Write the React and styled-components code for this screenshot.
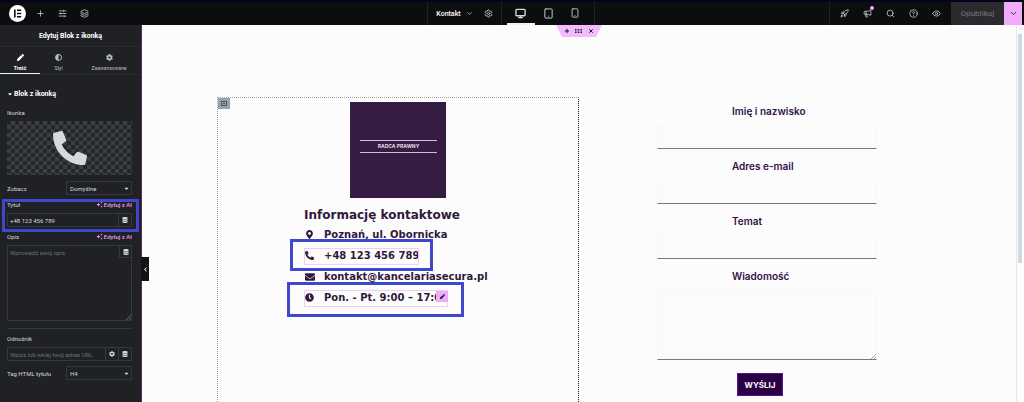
import React from 'react';
import styled, { createGlobalStyle, css } from 'styled-components';
import {
  ChevronDown,
  ChevronUp,
  CircleHelp,
  Eye,
  Layers,
  Megaphone,
  Monitor,
  Plus,
  Rocket,
  Search,
  Settings,
  SlidersHorizontal,
  Smartphone,
  Tablet,
  X,
} from 'lucide-react';
import {
  FaAdjust,
  FaCaretDown,
  FaChevronLeft,
  FaClock,
  FaCog,
  FaDatabase,
  FaEnvelope,
  FaMapMarkerAlt,
  FaPen,
  FaPhoneAlt,
} from 'react-icons/fa';

const GlobalStyle = createGlobalStyle`
  :root {
    --bar: #0c0d0e;
    --panel: #1f2124;
    --line: #35383d;
    --text: #d5d8dc;
    --pink: #f0abfc;
    --mark: #3f48cc;
    --plum: #351c43;
  }
  * {
    box-sizing: border-box;
  }
  body {
    margin: 0;
    font-family: Roboto, sans-serif;
    background: #fcfcfc;
  }
  button, input, select, textarea {
    margin: 0;
    padding: 0;
    border: 0;
    border-radius: 0;
    background: none;
    color: inherit;
    font-family: inherit;
    outline: none;
  }
  svg {
    display: block;
    flex-shrink: 0;
  }
`;

const Page = styled.div`
  display: flex;
  flex-direction: column;
  min-height: 100vh;
`;

/* top bar */

const TopBar = styled.header`
  display: grid;
  grid-template-columns: 1fr auto 1fr;
  height: 25px;
  padding-right: 2px;
  border-top: 2px solid #03031c;
  background: var(--bar);
  color: #d5d8dc;
`;

const BarGroup = styled.div`
  display: flex;
  align-items: stretch;
  justify-content: ${({ $end }) => ($end ? 'flex-end' : 'flex-start')};
`;

const BarSection = styled.div`
  display: flex;
  align-items: stretch;
  padding: 0 ${({ $pad }) => $pad || 0}px;
  border-left: 1px solid #1f2124;
`;

const BarButton = styled.button`
  position: relative;
  display: flex;
  align-items: center;
  justify-content: center;
  width: ${({ $width }) => $width || 23}px;
  border-bottom: 2px solid
    ${({ $active }) => ($active ? '#f1f1f3' : 'transparent')};
  padding-top: 1px;
`;

const LogoButton = styled(BarButton)`
  width: 29px;
  padding-left: 5px;
`;

const PageName = styled.button`
  display: flex;
  align-items: center;
  gap: 5px;
  padding: 0 3px 0 8px;
  color: #fff;
  font-size: 7px;
  font-weight: 500;
`;

const Dot = styled.span`
  position: absolute;
  top: 4px;
  right: 5px;
  width: 4px;
  height: 4px;
  border-radius: 50%;
  background: var(--pink);
`;

const PublishButton = styled.button`
  width: 53px;
  background: #2b2a2f;
  color: #6a6a70;
  font-size: 8px;
  font-weight: 500;
`;

const PublishMenu = styled.button`
  display: flex;
  align-items: center;
  justify-content: center;
  width: 18px;
  background: var(--pink);
  color: #0c0d0e;
`;

/* left panel */

const Main = styled.div`
  display: flex;
  flex: 1;
`;

const Panel = styled.aside`
  position: relative;
  flex: 0 0 142px;
  border-right: 1px solid #5a2a66;
  background: var(--panel);
  color: var(--text);
  font-size: 6px;
`;

const PanelTitle = styled.h1`
  height: 22px;
  margin: 0;
  border-bottom: 1px solid #2b2d31;
  color: #fff;
  font-size: 7px;
  font-weight: 700;
  line-height: 22px;
  text-align: center;
`;

const Tabs = styled.nav`
  display: flex;
  height: 28px;
  border-bottom: 1px solid #2b2d31;
`;

const Tab = styled.button`
  display: flex;
  flex: ${({ $grow }) => $grow || 1};
  flex-direction: column;
  align-items: center;
  gap: 4px;
  padding-top: 7px;
  border-bottom: 1px solid
    ${({ $active }) => ($active ? '#f1f1f3' : 'transparent')};
  color: ${({ $active }) => ($active ? '#fff' : '#b9bdc3')};
  font-size: 5px;
  font-weight: ${({ $active }) => ($active ? 700 : 400)};
`;

const Controls = styled.div`
  padding: 7px 9px 22px 7px;
`;

const SectionTitle = styled.h2`
  display: flex;
  align-items: center;
  gap: 1px;
  height: 24px;
  margin: 0;
  color: #fff;
  font-size: 7px;
  font-weight: 700;
`;

const Field = styled.div`
  position: relative;
  margin-bottom: ${({ $gap }) => $gap || 3}px;
`;

const FieldHead = styled.div`
  display: flex;
  align-items: center;
  justify-content: space-between;
  height: 15px;
  padding-bottom: 2px;
`;

const AiButton = styled.button`
  display: flex;
  align-items: center;
  gap: 1px;
  color: #e49df0;
  font-size: 6px;
  font-weight: 500;
`;

const Preview = styled.button`
  display: flex;
  align-items: center;
  justify-content: center;
  width: 100%;
  height: 54px;
  background: repeating-conic-gradient(#3b3e43 0% 25%, #232528 0% 50%) 0 0 / 8px
    8px;
  color: #d5d8dc;
`;

const Row = styled.div`
  display: flex;
  align-items: center;
  justify-content: space-between;
  height: 14px;
  margin-bottom: ${({ $gap }) => $gap || 0}px;
`;

const SelectBox = styled.div`
  position: relative;
  width: 66px;
  select {
    width: 100%;
    height: 14px;
    padding-left: 3px;
    border: 1px solid var(--line);
    border-radius: 1px;
    appearance: none;
    background: var(--panel);
    font-size: 6px;
  }
  svg {
    position: absolute;
    top: 4px;
    right: 2px;
    pointer-events: none;
  }
`;

const InputBox = styled.div`
  display: flex;
  height: 14px;
  border: 1px solid var(--line);
  border-radius: 1px;
  input {
    flex: 1;
    min-width: 0;
    padding-left: 2px;
    font-size: 6px;
  }
  input::placeholder {
    color: #6b7078;
  }
`;

const ToolButton = styled.button`
  display: flex;
  align-items: center;
  justify-content: center;
  width: 13px;
  border-left: 1px solid var(--line);
`;

const TextBox = styled.div`
  position: relative;
  textarea {
    display: block;
    width: 100%;
    height: 76px;
    padding: 3px 2px;
    border: 1px solid var(--line);
    border-radius: 1px;
    resize: none;
    font-size: 6px;
  }
  textarea::placeholder {
    color: #6b7078;
  }
  ${ToolButton} {
    position: absolute;
    top: 0;
    right: 0;
    height: 13px;
    border: 1px solid var(--line);
  }
`;

const Grip = styled.svg`
  position: absolute;
  right: 1px;
  bottom: 1px;
`;

const Divider = styled.hr`
  height: 1px;
  margin: 7px 0 3px;
  border: 0;
  background: var(--line);
`;

const CollapseButton = styled.button`
  position: absolute;
  z-index: 1;
  top: 232px;
  right: -8px;
  display: flex;
  align-items: center;
  justify-content: center;
  width: 8px;
  height: 24px;
  background: #111214;
  color: #fff;
`;

/* blue frame drawn over a field or a list item */
const Mark = styled.span`
  position: absolute;
  inset: ${({ $inset }) => $inset};
  border: 3px solid var(--mark);
  pointer-events: none;
`;

/* canvas */

const Canvas = styled.main`
  position: relative;
  display: flex;
  flex: 1;
  justify-content: center;
  padding-top: 72px;
  border-right: 1px solid #f0e2f3;
  background: #fcfcfc;
`;

const SectionHandle = styled.div`
  position: absolute;
  top: 0;
  left: calc(50% - 23px);
  display: flex;
  align-items: center;
  justify-content: space-around;
  width: 46px;
  height: 12px;
  padding: 0 5px;
  background: #f3bafd;
  clip-path: polygon(0 0, 100% 0, 87% 100%, 13% 100%);
  color: #2b1433;
  button {
    display: flex;
  }
`;

const Columns = styled.div`
  display: grid;
  grid-template-columns: 1fr 1fr;
  width: 100%;
  max-width: 724px;
`;

const ContactColumn = styled.section`
  position: relative;
  padding-top: 4px;
  border: 1px dotted #a2a2a8;
  border-right: 1px dotted #1c1c1e;
  border-bottom: 0;
`;

const ColumnHandle = styled.button`
  position: absolute;
  top: 0;
  left: 0;
  display: flex;
  align-items: center;
  justify-content: center;
  width: 12px;
  height: 11px;
  background: #98a2ae;
  color: #46505c;
`;

const Emblem = styled.div`
  display: flex;
  align-items: center;
  width: 96px;
  height: 96px;
  margin: 0 auto;
  padding: 0 9px 7px 10px;
  background: var(--plum);
  span {
    flex: 1;
    border-top: 1px solid #cdbfd3;
    border-bottom: 1px solid #cdbfd3;
    color: #e6dcea;
    font-family: Inter, sans-serif;
    font-size: 5px;
    font-weight: 700;
    line-height: 11px;
    text-align: center;
  }
`;

const Contact = styled.div`
  width: 188px;
  margin: 8px auto 0;
  color: #2f1a3b;
  font-family: 'DejaVu Sans', Verdana, sans-serif;
  font-weight: 700;
  white-space: nowrap;
  h2 {
    margin: 0;
    font-size: 12px;
    line-height: 18px;
  }
  ul {
    margin: 0;
    padding: 0;
    list-style: none;
  }
`;

const ContactItem = styled.li`
  position: relative;
  display: flex;
  align-items: center;
  gap: 9px;
  width: fit-content;
  height: 21px;
  font-size: 10px;
  ${({ $outlined }) =>
    $outlined &&
    css`
      &::before {
        content: '';
        position: absolute;
        inset: 3px 0 1px;
        border: 1px solid #f1cdf6;
      }
    `}
`;

const ItemIcon = styled.span`
  display: flex;
  justify-content: center;
  width: 11px;
`;

const EditBadge = styled.button`
  position: absolute;
  top: 4px;
  right: 0;
  display: flex;
  align-items: center;
  justify-content: center;
  width: 12px;
  height: 11px;
  background: var(--pink);
`;

const Form = styled.form`
  width: 220px;
  margin-left: 78px;
  padding-top: 4px;
  color: #32104a;
  font-family: Inter, sans-serif;
`;

const FormField = styled.div`
  position: relative;
  margin-bottom: 7px;
  label {
    display: block;
    margin-bottom: 4px;
    padding-left: 75px;
    font-size: 10px;
    font-weight: 600;
    line-height: 20px;
  }
  input,
  textarea {
    display: block;
    width: 100%;
    height: 24px;
    padding: 4px;
    border: 1px solid #f8f8f9;
    border-bottom: 1px solid #77777b;
    background: #fbfbfb;
    font-size: 10px;
    resize: none;
  }
  textarea {
    height: 70px;
  }
`;

const SendButton = styled.button`
  display: block;
  width: 46px;
  height: 23px;
  margin: 13px 0 6px 80px;
  border: 1px solid #4b1c86;
  background: #2d0046;
  color: #fff;
  font-size: 8px;
  font-weight: 700;
`;

const ScrollTrack = styled.div`
  display: flex;
  flex: 0 0 7px;
  flex-direction: column;
  align-items: center;
  gap: 3px;
  padding: 1px 1px 0 0;
  background: #fdfdfd;
  color: #9a9aa0;
`;

const ScrollThumb = styled.div`
  width: 4px;
  height: 61%;
  background: #cddbe0;
`;

const ElementorLogo = () => (
  <svg width="17" height="17" viewBox="0 0 17 17">
    <circle cx="8.5" cy="8.5" r="8.5" fill="#fff" />
    <path
      d="M5 4.5h1.6v8H5zM8 4.5h4.2v1.6H8zM8 7.7h4.2v1.6H8zM8 10.9h4.2v1.6H8z"
      fill="#0c0d0e"
    />
  </svg>
);

const Sparkles = () => (
  <svg width="7" height="7" viewBox="0 0 14 14" fill="currentColor">
    <path d="M5 3l1.2 3L9.500 7.200 6.200 8.400 5 11.600 3.800 8.400.5 7.200 3.800 6zM11 1l.7 1.600 1.600.7-1.600.7L11 5.600 10.300 4 8.700 3.300l1.600-.7zM11 9l.7 1.600 1.600.7-1.600.7-.7 1.600-.7-1.600-1.600-.7 1.600-.7z" />
  </svg>
);

const Dots = () => (
  <svg width="7" height="4" viewBox="0 0 7 4" fill="currentColor">
    <path d="M0 0h1.500v1.500H0zM2.700 0h1.500v1.500H2.700zM5.400 0h1.500v1.500H5.400zM0 2.500h1.500V4H0zM2.700 2.500h1.500V4H2.700zM5.400 2.500h1.500V4H5.400z" />
  </svg>
);

const ResizeGrip = ({ color }) => (
  <Grip width="5" height="5" viewBox="0 0 5 5" stroke={color}>
    <path d="M0 5L5 0M3 5l2-2" strokeWidth="0.800" />
  </Grip>
);

const contacts = [
  { icon: <FaMapMarkerAlt size={9} />, text: 'Poznań, ul. Obornicka' },
  {
    icon: <FaPhoneAlt size={9} />,
    text: '+48 123 456 789',
    outlined: true,
    mark: '-6px -14px -5px -14px',
  },
  { icon: <FaEnvelope size={10} />, text: 'kontakt@kancelariasecura.pl' },
  {
    icon: <FaClock size={9} />,
    text: 'Pon. - Pt. 9:00 – 17:00',
    outlined: true,
    editable: true,
    mark: '-5px -16px -9px -17px',
  },
];

const formFields = [
  { id: 'name', label: 'Imię i nazwisko' },
  { id: 'email', label: 'Adres e-mail' },
  { id: 'subject', label: 'Temat' },
];

function Header() {
  return (
    <TopBar>
      <BarGroup>
        <LogoButton aria-label="Menu">
          <ElementorLogo />
        </LogoButton>
        <BarButton aria-label="Dodaj element" $width={22}>
          <Plus size={9} />
        </BarButton>
        <BarButton aria-label="Ustawienia witryny" $width={22}>
          <SlidersHorizontal size={9} />
        </BarButton>
        <BarButton aria-label="Struktura" $width={22}>
          <Layers size={9} />
        </BarButton>
      </BarGroup>
      <BarGroup>
        <BarSection>
          <PageName>
            Kontakt
            <ChevronDown size={7} />
          </PageName>
          <BarButton aria-label="Ustawienia strony" $width={25}>
            <Settings size={9} />
          </BarButton>
        </BarSection>
        <BarSection $pad={5}>
          <BarButton aria-label="Komputer" $width={28} $active>
            <Monitor size={11} strokeWidth={3} />
          </BarButton>
          <BarButton aria-label="Tablet" $width={27}>
            <Tablet size={11} strokeWidth={2} />
          </BarButton>
          <BarButton aria-label="Telefon" $width={27}>
            <Smartphone size={10} strokeWidth={2} />
          </BarButton>
        </BarSection>
        <BarSection />
      </BarGroup>
      <BarGroup $end>
        <BarSection $pad={3}>
          <BarButton aria-label="Co nowego">
            <Rocket size={9} />
          </BarButton>
          <BarButton aria-label="Powiadomienia">
            <Megaphone size={9} />
            <Dot />
          </BarButton>
          <BarButton aria-label="Szukaj">
            <Search size={9} />
          </BarButton>
          <BarButton aria-label="Pomoc">
            <CircleHelp size={9} />
          </BarButton>
          <BarButton aria-label="Podgląd">
            <Eye size={9} />
          </BarButton>
        </BarSection>
        <PublishButton>Opublikuj</PublishButton>
        <PublishMenu aria-label="Opcje publikacji">
          <ChevronDown size={9} />
        </PublishMenu>
      </BarGroup>
    </TopBar>
  );
}

function AiLink() {
  return (
    <AiButton>
      <Sparkles />
      Edytuj z AI
    </AiButton>
  );
}

function DynamicButton() {
  return (
    <ToolButton aria-label="Tagi dynamiczne">
      <FaDatabase size={6} />
    </ToolButton>
  );
}

function EditorPanel() {
  return (
    <Panel>
      <PanelTitle>Edytuj Blok z ikonką</PanelTitle>
      <Tabs>
        <Tab $grow="0 0 40px" $active>
          <FaPen size={7} />
          Treść
        </Tab>
        <Tab $grow="0 0 37px">
          <FaAdjust size={7} />
          Styl
        </Tab>
        <Tab>
          <FaCog size={7} />
          Zaawansowane
        </Tab>
      </Tabs>
      <Controls>
        <SectionTitle>
          <FaCaretDown size={6} />
          Blok z ikonką
        </SectionTitle>
        <Field $gap={6}>
          <FieldHead>
            <span>Ikonka</span>
          </FieldHead>
          <Preview aria-label="Ikonka">
            <FaPhoneAlt size={34} />
          </Preview>
        </Field>
        <Row $gap={3}>
          <label htmlFor="view">Zobacz</label>
          <SelectBox>
            <select id="view" defaultValue="Domyślne">
              <option>Domyślne</option>
            </select>
            <FaCaretDown size={7} />
          </SelectBox>
        </Row>
        <Field>
          <FieldHead>
            <label htmlFor="title">Tytuł</label>
            <AiLink />
          </FieldHead>
          <InputBox>
            <input id="title" defaultValue="+48 123 456 789" />
            <DynamicButton />
          </InputBox>
          <Mark $inset="1px -7px -5px -5px" />
        </Field>
        <Field>
          <FieldHead>
            <label htmlFor="description">Opis</label>
            <AiLink />
          </FieldHead>
          <TextBox>
            <textarea id="description" placeholder="Wprowadź swój opis" />
            <DynamicButton />
            <ResizeGrip color="#777b82" />
          </TextBox>
        </Field>
        <Divider />
        <Field $gap={5}>
          <FieldHead>
            <label htmlFor="link">Odnośnik</label>
          </FieldHead>
          <InputBox>
            <input id="link" placeholder="Wpisz lub wklej twój adres URL" />
            <ToolButton aria-label="Opcje odnośnika">
              <FaCog size={6} />
            </ToolButton>
            <DynamicButton />
          </InputBox>
        </Field>
        <Row>
          <label htmlFor="tag">Tag HTML tytułu</label>
          <SelectBox>
            <select id="tag" defaultValue="H4">
              <option>H4</option>
            </select>
            <FaCaretDown size={7} />
          </SelectBox>
        </Row>
      </Controls>
      <CollapseButton aria-label="Zwiń panel">
        <FaChevronLeft size={5} />
      </CollapseButton>
    </Panel>
  );
}

export default function App() {
  return (
    <Page>
      <GlobalStyle />
      <Header />
      <Main>
        <EditorPanel />
        <Canvas>
          <SectionHandle>
            <button aria-label="Dodaj sekcję">
              <Plus size={6} strokeWidth={4} />
            </button>
            <button aria-label="Edytuj sekcję">
              <Dots />
            </button>
            <button aria-label="Usuń sekcję">
              <X size={6} strokeWidth={4} />
            </button>
          </SectionHandle>
          <Columns>
            <ContactColumn>
              <ColumnHandle aria-label="Edytuj kontener">
                <svg width="6" height="5" viewBox="0 0 6 5" fill="none">
                  <path d="M.5.5h5v4h-5zM2 2.500h2" stroke="currentColor" />
                </svg>
              </ColumnHandle>
              <Emblem>
                <span>RADCA PRAWNY</span>
              </Emblem>
              <Contact>
                <h2>Informację kontaktowe</h2>
                <ul>
                  {contacts.map((item) => (
                    <ContactItem key={item.text} $outlined={item.outlined}>
                      <ItemIcon>{item.icon}</ItemIcon>
                      {item.text}
                      {item.editable && (
                        <EditBadge aria-label="Edytuj">
                          <FaPen size={5} />
                        </EditBadge>
                      )}
                      {item.mark && <Mark $inset={item.mark} />}
                    </ContactItem>
                  ))}
                </ul>
              </Contact>
            </ContactColumn>
            <Form onSubmit={(e) => e.preventDefault()}>
              {formFields.map((field) => (
                <FormField key={field.id}>
                  <label htmlFor={field.id}>{field.label}</label>
                  <input id={field.id} />
                </FormField>
              ))}
              <FormField>
                <label htmlFor="message">Wiadomość</label>
                <textarea id="message" />
                <ResizeGrip color="#8a8a8e" />
              </FormField>
              <SendButton>WYŚLIJ</SendButton>
            </Form>
          </Columns>
        </Canvas>
        <ScrollTrack>
          <ChevronUp size={5} />
          <ScrollThumb />
        </ScrollTrack>
      </Main>
    </Page>
  );
}
